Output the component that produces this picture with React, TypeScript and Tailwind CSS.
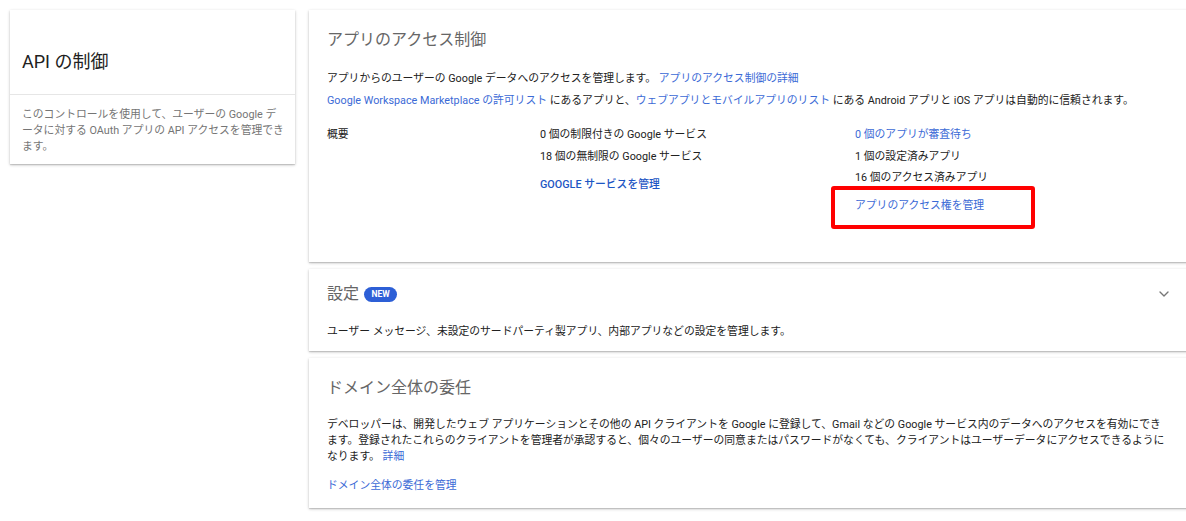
import React from "react";
import { ChevronDown } from "lucide-react";

const font = { fontFamily: 'Roboto, "Noto Sans CJK JP", sans-serif' };

function Card({ children, className = "" }: { children: React.ReactNode; className?: string }) {
  return (
    <div
      className={
        "bg-white shadow-[0_1px_3px_rgba(0,0,0,0.22),0_1px_1px_rgba(0,0,0,0.12)] " + className
      }
    >
      {children}
    </div>
  );
}

const link = "text-[#3b6ad6]";

export default function App() {
  return (
    <div className="w-[1186px] h-[521px] overflow-hidden bg-white" style={font}>
      <div className="flex items-start gap-[14px] pl-[10px] pt-[10px]">
        {/* Left card */}
        <Card className="w-[285px] shrink-0">
          <div className="pl-[12px] pt-[40px] pb-[20px] border-b border-[#e6e6e6]">
            <div className="text-[18px] leading-[24px] text-[#212121]">API の制御</div>
          </div>
          <div className="pl-[12px] pr-[8px] pt-[12px] pb-[9px] text-[10.8px] leading-[16px] text-[#757575] whitespace-nowrap">
            このコントロールを使用して、ユーザーの Google デ
            <br />
            ータに対する OAuth アプリの API アクセスを管理でき
            <br />
            ます。
          </div>
        </Card>

        {/* Right column */}
        <div className="w-[885px] shrink-0 flex flex-col gap-[7px]">
          {/* Card 1 */}
          <Card className="pl-[18px] pt-[20px] pb-[48px]">
            <div className="text-[16px] leading-[20px] text-[#666666]">アプリのアクセス制御</div>
            <div className="mt-[21px] text-[10.8px] leading-[16px] text-[#212121] whitespace-nowrap">
              アプリからのユーザーの Google データへのアクセスを管理します。{" "}
              <span className={link}>アプリのアクセス制御の詳細</span>
            </div>
            <div className="mt-[6px] text-[10.8px] leading-[16px] text-[#212121] whitespace-nowrap">
              <span className={link}>Google Workspace Marketplace の許可リスト</span> にあるアプリと、
              <span className={link}>ウェブアプリとモバイルアプリのリスト</span> にある Android アプリと iOS
              アプリは自動的に信頼されます。
            </div>
            <div className="mt-[18px] flex text-[10.8px] leading-[16px] text-[#212121]">
              <div className="w-[213px] shrink-0">概要</div>
              <div className="w-[315px] shrink-0 flex flex-col">
                <div>0 個の制限付きの Google サービス</div>
                <div className="mt-[6px]">18 個の無制限の Google サービス</div>
                <div className="mt-[12px] text-[#1d56c4] font-medium">GOOGLE サービスを管理</div>
              </div>
              <div className="flex flex-col">
                <div className={link}>0 個のアプリが審査待ち</div>
                <div className="mt-[6px]">1 個の設定済みアプリ</div>
                <div className="mt-[5px]">16 個のアクセス済みアプリ</div>
                <div className="mt-[12px] relative">
                  <span className={link}>アプリのアクセス権を管理</span>
                  <span className="absolute left-[-24px] top-[-12px] w-[204px] h-[43px] border-[4px] border-[#ff0000] rounded-[3px]" />
                </div>
              </div>
            </div>
          </Card>

          {/* Card 2 */}
          <Card className="pl-[18px] pr-[14px] pt-[15px] pb-[11px]">
            <div className="flex items-center">
              <div className="text-[16px] leading-[20px] text-[#666666]">設定</div>
              <span className="ml-[5px] h-[15px] w-[33px] rounded-full bg-[#2d5fd6] text-white text-[8.5px] font-bold flex items-center justify-center">
                NEW
              </span>
              <div className="flex-1" />
              <div className="mr-[8px]">
                <ChevronDown size={16} strokeWidth={2} color="#777777" />
              </div>
            </div>
            <div className="mt-[20px] text-[10.8px] leading-[16px] text-[#212121]">
              ユーザー メッセージ、未設定のサードパーティ製アプリ、内部アプリなどの設定を管理します。
            </div>
          </Card>

          {/* Card 3 */}
          <Card className="pl-[18px] pt-[20px] pb-[14px]">
            <div className="text-[16px] leading-[20px] text-[#666666]">ドメイン全体の委任</div>
            <div className="mt-[19px] text-[10.8px] leading-[16px] text-[#212121] whitespace-nowrap">
              デベロッパーは、開発したウェブ アプリケーションとその他の API クライアントを Google に登録して、Gmail などの Google
              サービス内のデータへのアクセスを有効にでき
              <br />
              ます。登録されたこれらのクライアントを管理者が承認すると、個々のユーザーの同意またはパスワードがなくても、クライアントはユーザーデータにアクセスできるように
              <br />
              なります。 <span className={link}>詳細</span>
            </div>
            <div className={"mt-[13px] text-[10.8px] leading-[16px] " + link}>ドメイン全体の委任を管理</div>
          </Card>
        </div>
      </div>
    </div>
  );
}
